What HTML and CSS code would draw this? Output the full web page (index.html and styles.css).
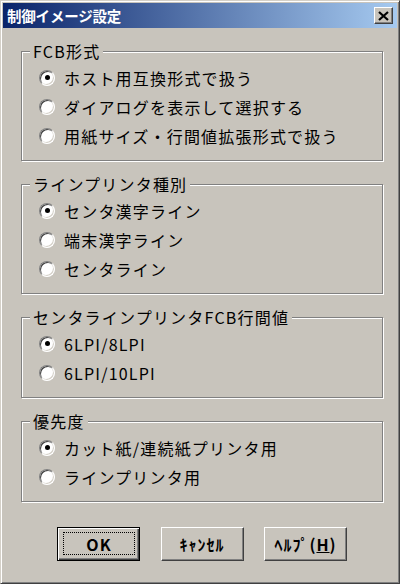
FILE: index.html
```html
<!DOCTYPE html>
<html lang="ja">
<head>
<meta charset="utf-8">
<title>制御イメージ設定</title>
<link rel="stylesheet" href="styles.css">
</head>
<body>
<div class="window">
  <div class="titlebar">
    <span class="title">制御イメージ設定</span>
    <span class="close">
      <svg width="11" height="10" viewBox="0 0 11 10"><path d="M1 1 L10 9 M10 1 L1 9" stroke="#000" stroke-width="2.2" fill="none"/></svg>
    </span>
  </div>
  <div class="content">
    <div class="group">
      <span class="legend">FCB形式</span>
      <div class="row"><span class="radio checked"></span><span class="label">ホスト用互換形式で扱う</span></div>
      <div class="row"><span class="radio"></span><span class="label">ダイアログを表示して選択する</span></div>
      <div class="row"><span class="radio"></span><span class="label">用紙サイズ・行間値拡張形式で扱う</span></div>
    </div>
    <div class="group">
      <span class="legend">ラインプリンタ種別</span>
      <div class="row"><span class="radio checked"></span><span class="label">センタ漢字ライン</span></div>
      <div class="row"><span class="radio"></span><span class="label">端末漢字ライン</span></div>
      <div class="row"><span class="radio"></span><span class="label">センタライン</span></div>
    </div>
    <div class="group">
      <span class="legend">センタラインプリンタFCB行間値</span>
      <div class="row"><span class="radio checked"></span><span class="label">6LPI/8LPI</span></div>
      <div class="row"><span class="radio"></span><span class="label">6LPI/10LPI</span></div>
    </div>
    <div class="group">
      <span class="legend">優先度</span>
      <div class="row"><span class="radio checked"></span><span class="label">カット紙/連続紙プリンタ用</span></div>
      <div class="row"><span class="radio"></span><span class="label">ラインプリンタ用</span></div>
    </div>
    <div class="buttons">
      <div class="btn default"><span class="focus">OK</span></div>
      <div class="btn">ｷｬﾝｾﾙ</div>
      <div class="btn">ﾍﾙﾌﾟ(<u>H</u>)</div>
    </div>
  </div>
</div>
</body>
</html>
```
FILE: styles.css
```css
html, body {
  margin: 0;
  padding: 0;
}
body {
  width: 400px;
  height: 584px;
  background: #c8c4bc;
  font-family: "Noto Sans CJK JP", sans-serif;
  color: #000;
}
.window {
  box-sizing: border-box;
  width: 400px;
  height: 584px;
  border: 1px solid;
  border-color: #d4d0c8 #404040 #404040 #d4d0c8;
  box-shadow: inset 1px 1px 0 #fff, inset -1px -1px 0 #808080;
  padding: 2px;
  display: flex;
  flex-direction: column;
  background: #c8c4bc;
}
.titlebar {
  height: 25px;
  flex: none;
  display: flex;
  align-items: center;
  justify-content: space-between;
  padding: 0 4px 0 4px;
  background: linear-gradient(90deg, #0a246a 0%, #a6caf0 100%);
  color: #fff;
}
.title {
  font-size: 14.5px;
  font-weight: bold;
  letter-spacing: -0.2px;
  line-height: 25px;
}
.close {
  box-sizing: border-box;
  width: 19px;
  height: 17px;
  display: flex;
  align-items: center;
  justify-content: center;
  background: #c8c4bc;
  border: 1px solid;
  border-color: #fff #404040 #404040 #fff;
  box-shadow: inset -1px -1px 0 #808080;
}
.content {
  flex: 1;
  display: flex;
  flex-direction: column;
  padding: 23px 14px 0 18px;
}
.group {
  position: relative;
  border: 1px solid #808080;
  box-shadow: 1px 1px 0 #fff, inset 1px 1px 0 #fff;
  padding: 11px 0 10px 17px;
  margin-bottom: 23px;
}
.legend {
  position: absolute;
  top: -11px;
  left: 8px;
  padding: 0 3px;
  background: #c8c4bc;
  font-size: 16px;
  line-height: 20px;
  letter-spacing: 1.2px;
  white-space: nowrap;
}
.row {
  height: 29px;
  display: flex;
  align-items: center;
  gap: 9px;
}
.label {
  font-size: 16px;
  line-height: 20px;
  letter-spacing: 1.2px;
  white-space: nowrap;
}
.radio {
  box-sizing: border-box;
  flex: none;
  position: relative;
  width: 16px;
  height: 16px;
  border-radius: 50%;
  background: #fff;
  border: 1px solid;
  border-color: #808080 #fff #fff #808080;
  box-shadow: inset 1px 1px 0 #404040, inset -1px -1px 0 #d4d0c8;
}
.radio.checked::after {
  content: "";
  position: absolute;
  left: 50%;
  top: 50%;
  width: 5px;
  height: 5px;
  margin: -2.5px 0 0 -2.5px;
  border-radius: 50%;
  background: #000;
}
.buttons {
  display: flex;
  gap: 20.5px;
  padding-left: 36px;
  margin-top: 2px;
}
.btn {
  box-sizing: border-box;
  width: 83px;
  height: 34px;
  display: flex;
  align-items: center;
  justify-content: center;
  background: #c8c4bc;
  border: 1px solid;
  border-color: #fff #404040 #404040 #fff;
  box-shadow: inset -1px -1px 0 #808080;
  font-size: 16px;
  font-weight: bold;
  letter-spacing: 1px;
  line-height: 20px;
}
.btn.default {
  border: 1px solid #000;
  box-shadow: inset 1px 1px 0 #fff, inset -1px -1px 0 #404040, inset -2px -2px 0 #808080;
  align-items: stretch;
  padding: 4px 4px 5px 5px;
}
.focus {
  flex: 1;
  display: flex;
  align-items: center;
  justify-content: center;
  border: 1px dotted #000;
}
```
